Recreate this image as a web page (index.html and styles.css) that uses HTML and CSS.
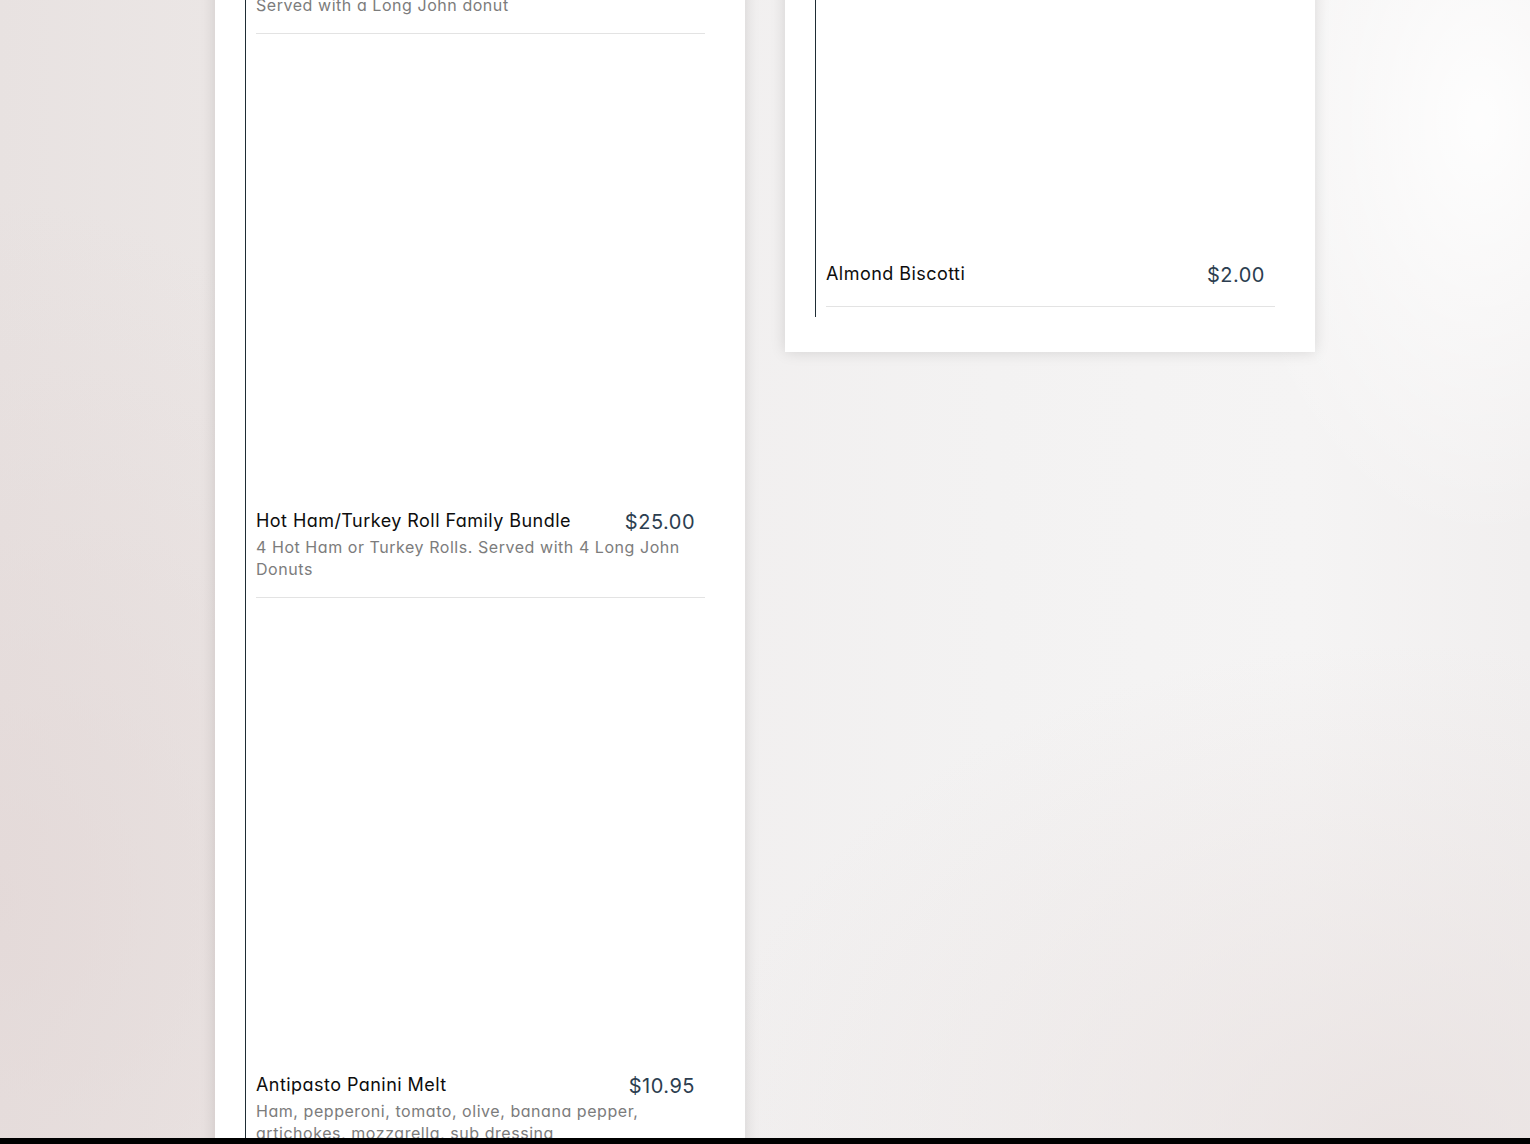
FILE: index.html
```html
<!DOCTYPE html>
<html lang="en">
<head>
    <meta charset="UTF-8">
    <title>Menu</title>
    <link rel="stylesheet" href="styles.css">
</head>
<body>

<div class="menu">
    <div class="card">
        <h2>Sandwiches</h2>
        <div class="banner"></div>
        <div class="list">
            <div class="item">
                <div class="thumb"></div>
                <div class="head">
                    <span class="name">Hot Ham/Turkey Roll Combo</span>
                    <span class="price">$7.50</span>
                </div>
                <div class="desc">Served with a Long John donut</div>
            </div>
            <div class="item">
                <div class="thumb"></div>
                <div class="head">
                    <span class="name">Hot Ham/Turkey Roll Family Bundle</span>
                    <span class="price">$25.00</span>
                </div>
                <div class="desc">4 Hot Ham or Turkey Rolls. Served with 4 Long John Donuts</div>
            </div>
            <div class="item">
                <div class="thumb"></div>
                <div class="head">
                    <span class="name">Antipasto Panini Melt</span>
                    <span class="price">$10.95</span>
                </div>
                <div class="desc">Ham, pepperoni, tomato, olive, banana pepper, artichokes, mozzarella, sub dressing</div>
            </div>
        </div>
    </div>

    <div class="card">
        <h2>Desserts</h2>
        <div class="list">
            <div class="item">
                <div class="thumb"></div>
                <div class="head">
                    <span class="name">Cannoli</span>
                    <span class="price">$3.50</span>
                </div>
            </div>
            <div class="item">
                <div class="thumb"></div>
                <div class="head">
                    <span class="name">Almond Biscotti</span>
                    <span class="price">$2.00</span>
                </div>
            </div>
        </div>
    </div>
</div>

<div class="bottom-bar"></div>

</body>
</html>
```

FILE: styles.css
```css
* {
    box-sizing: border-box;
}

body {
    margin: 0;
    font-family: "Inter", "Noto Sans", sans-serif;
    font-feature-settings: "cv11";
    min-height: 100vh;
    background:
        radial-gradient(ellipse 260px 420px at 1480px 120px, rgba(255, 255, 255, 0.9), rgba(255, 255, 255, 0)),
        radial-gradient(ellipse 500px 700px at 0 900px, rgba(226, 214, 213, 0.7), rgba(226, 214, 213, 0)),
        radial-gradient(ellipse 700px 500px at 1400px 1144px, rgba(232, 224, 223, 0.8), rgba(232, 224, 223, 0)),
        linear-gradient(90deg, #e8e2e1 0%, #ebe6e5 14%, #f1efef 45%, #f3f2f2 65%, #f5f4f4 85%, #f1efef 100%);
    background-attachment: fixed;
}

.menu {
    display: flex;
    justify-content: center;
    align-items: flex-start;
    gap: 40px;
    margin-top: -819px;
}

.card {
    width: 530px;
    background: #fff;
    padding: 30px 40px 35px 30px;
    box-shadow: 0 0 14px rgba(0, 0, 0, 0.13);
}

.card h2 {
    margin: 0 0 20px;
    font-size: 28px;
    line-height: 36px;
    font-weight: 500;
}

.banner {
    height: 225px;
}

.list {
    border-left: 1px solid #1f2d35;
    padding-bottom: 10px;
}

.item {
    margin-left: 10px;
    padding: 0 10px 17px 0;
    border-bottom: 1px solid #e3e3e3;
}

.thumb {
    height: 475px;
}

.head {
    display: flex;
    justify-content: space-between;
    align-items: flex-start;
    gap: 20px;
    margin-bottom: 2px;
}

.name {
    font-size: 18px;
    line-height: 24px;
    letter-spacing: 0.45px;
    color: #0d0d0d;
}

.price {
    font-size: 20px;
    line-height: 24px;
    letter-spacing: 0.5px;
    padding-top: 1px;
    color: #2c3e50;
    white-space: nowrap;
}

.desc {
    font-size: 16px;
    line-height: 22px;
    color: #7c7c7c;
    letter-spacing: 0.55px;
}

.bottom-bar {
    position: fixed;
    left: 0;
    right: 0;
    bottom: 0;
    height: 6px;
    background: #000;
}
```
